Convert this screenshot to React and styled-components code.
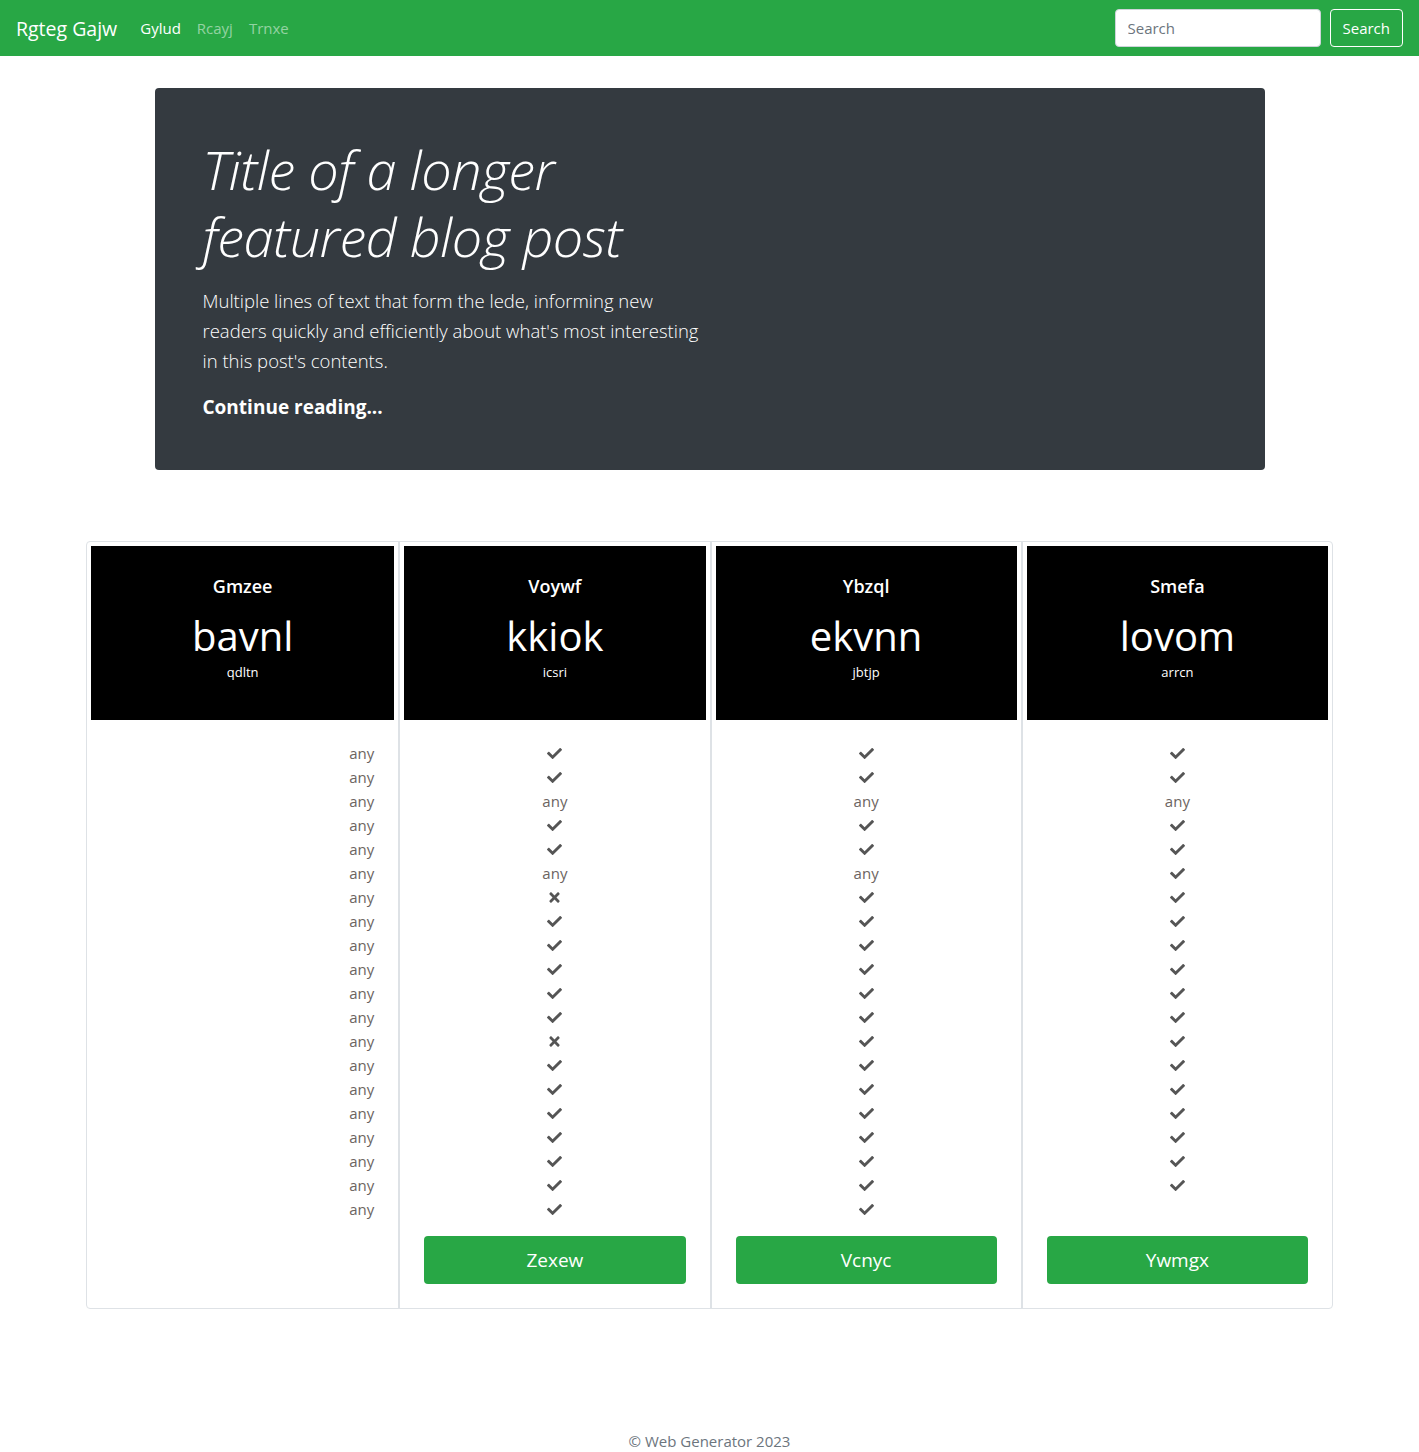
import React from "react";
import styled, { createGlobalStyle } from "styled-components";
import { FaCheck, FaTimes } from "react-icons/fa";

const GlobalStyle = createGlobalStyle`
  body {
    margin: 0;
    font-family: "Open Sans", "Noto Sans", sans-serif;
    color: #212529;
    background: #fff;
  }
  * { box-sizing: border-box; }
`;

const Navbar = styled.nav`
  height: 56px;
  background: #28a745;
  display: flex;
  align-items: center;
  padding: 0 16px;
`;

const Brand = styled.a`
  color: #fff;
  font-size: 19.5px;
  margin-right: 15px;
  text-decoration: none;
`;

const NavLink = styled.a`
  color: ${(p) => (p.active ? "#fff" : "rgba(255,255,255,0.5)")};
  font-size: 15px;
  padding: 8px;
  text-decoration: none;
`;

const SearchForm = styled.form`
  margin-left: auto;
  display: flex;
  gap: 9px;
`;

const SearchInput = styled.input`
  width: 206px;
  height: 38px;
  border: 1px solid #ced4da;
  border-radius: 4px;
  padding: 0 12px;
  font: inherit;
  font-size: 15px;
  &::placeholder { color: #6c757d; }
`;

const OutlineButton = styled.button`
  height: 38px;
  padding: 0 12px;
  background: transparent;
  border: 1px solid #fff;
  border-radius: 4px;
  color: #fff;
  font: inherit;
  font-size: 15px;
`;

const Jumbotron = styled.section`
  width: 1110px;
  margin: 32px auto 71px;
  background: #343a40;
  border-radius: 4px;
  padding: 48px;
  color: #fff;
`;

const Title = styled.h1`
  margin: 0 0 16px;
  font-size: 54px;
  font-weight: 300;
  font-style: italic;
  line-height: 67px;
  letter-spacing: -0.5px;
`;

const Lede = styled.p`
  margin: 0 0 16px;
  max-width: 510px;
  font-size: 18.5px;
  font-weight: 300;
  line-height: 30px;
`;

const ReadMore = styled.a`
  display: block;
  font-size: 19px;
  font-weight: 700;
  line-height: 30px;
  color: #fff;
  text-decoration: none;
`;

const Pricing = styled.div`
  width: 1247px;
  margin: 0 auto;
  border: 1px solid #dee2e6;
  border-radius: 4px;
  display: grid;
  grid-template-columns: repeat(4, 1fr);
`;

const Column = styled.div`
  padding: 4px 4px 24px;
  display: flex;
  flex-direction: column;
  & + & { border-left: 2px solid #dee2e6; }
`;

const Header = styled.div`
  height: 174px;
  background: #000;
  color: #fff;
  text-align: center;
  padding-top: 28px;
`;

const PlanName = styled.div`
  font-size: 18px;
  font-weight: 600;
  line-height: 24px;
`;

const Price = styled.div`
  margin-top: 12px;
  font-size: 40px;
  line-height: 52px;
`;

const Sub = styled.div`
  margin-top: 1px;
  font-size: 13px;
  line-height: 18px;
`;

const List = styled.ul`
  flex: 1;
  list-style: none;
  margin: 0;
  padding: 21px 20px 15px;
  text-align: ${(p) => (p.right ? "right" : "center")};
`;

const Item = styled.li`
  height: 24px;
  line-height: 24px;
  font-size: 15px;
  color: #6c6461;
  svg {
    color: #555;
    font-size: 15px;
    vertical-align: -2px;
  }
`;

const BuyButton = styled.button`
  margin: 0 20px;
  height: 48px;
  border: none;
  border-radius: 4px;
  background: #28a745;
  color: #fff;
  font: inherit;
  font-size: 19px;
`;

const Footer = styled.footer`
  padding: 120px 0 0;
  text-align: center;
  font-size: 15px;
  line-height: 24px;
  color: #6c757d;
`;

const C = "c";
const X = "x";
const A = "any";

const plans = [
  { name: "Gmzee", price: "bavnl", sub: "qdltn", right: true, items: Array(20).fill(A) },
  {
    name: "Voywf", price: "kkiok", sub: "icsri", button: "Zexew",
    items: [C, C, A, C, C, A, X, C, C, C, C, C, X, C, C, C, C, C, C, C],
  },
  {
    name: "Ybzql", price: "ekvnn", sub: "jbtjp", button: "Vcnyc",
    items: [C, C, A, C, C, A, ...Array(14).fill(C)],
  },
  {
    name: "Smefa", price: "lovom", sub: "arrcn", button: "Ywmgx",
    items: [C, C, A, ...Array(16).fill(C)],
  },
];

function Cell({ value }) {
  if (value === C) return <Item><FaCheck /></Item>;
  if (value === X) return <Item><FaTimes /></Item>;
  return <Item>{value}</Item>;
}

export default function App() {
  return (
    <>
      <GlobalStyle />
      <Navbar>
        <Brand href="#">Rgteg Gajw</Brand>
        <NavLink href="#" active>Gylud</NavLink>
        <NavLink href="#">Rcayj</NavLink>
        <NavLink href="#">Trnxe</NavLink>
        <SearchForm onSubmit={(e) => e.preventDefault()}>
          <SearchInput placeholder="Search" />
          <OutlineButton>Search</OutlineButton>
        </SearchForm>
      </Navbar>

      <Jumbotron>
        <Title>
          Title of a longer
          <br />
          featured blog post
        </Title>
        <Lede>
          Multiple lines of text that form the lede, informing new readers quickly and
          efficiently about what's most interesting in this post's contents.
        </Lede>
        <ReadMore href="#">Continue reading...</ReadMore>
      </Jumbotron>

      <Pricing>
        {plans.map((p) => (
          <Column key={p.name}>
            <Header>
              <PlanName>{p.name}</PlanName>
              <Price>{p.price}</Price>
              <Sub>{p.sub}</Sub>
            </Header>
            <List right={p.right}>
              {p.items.map((v, i) => (
                <Cell key={i} value={v} />
              ))}
            </List>
            {p.button && <BuyButton>{p.button}</BuyButton>}
          </Column>
        ))}
      </Pricing>

      <Footer>© Web Generator 2023</Footer>
    </>
  );
}
